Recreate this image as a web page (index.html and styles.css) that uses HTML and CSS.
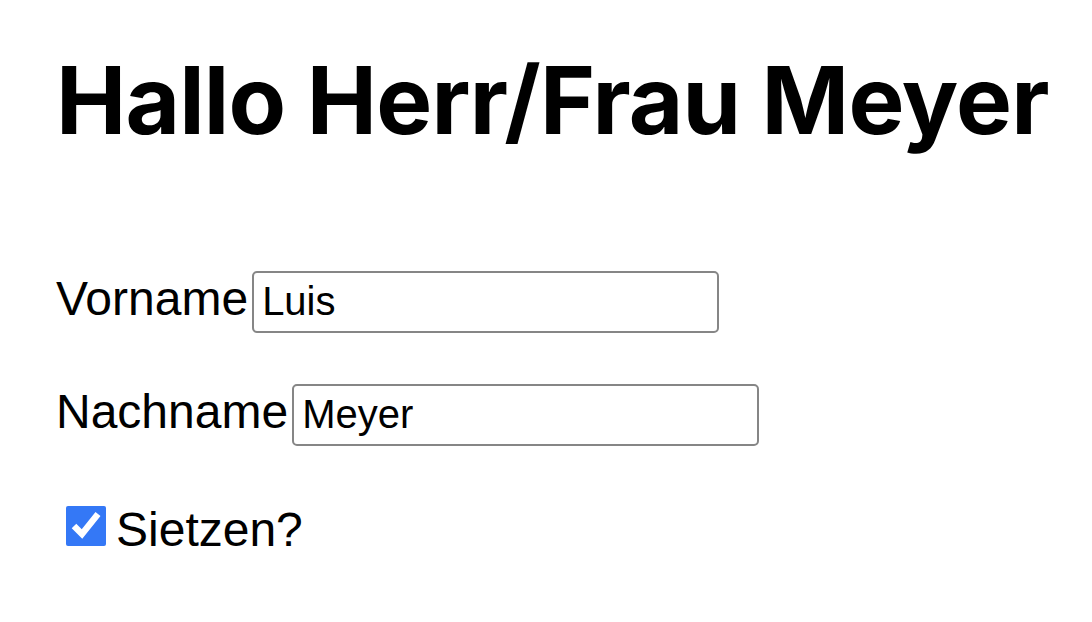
FILE: index.html
```html
<!DOCTYPE html>
<html lang="de">
<head>
<meta charset="utf-8">
<title>Hallo</title>
<link rel="stylesheet" href="styles.css">
</head>
<body>
<main class="page">
  <h1 class="title">Hallo Herr/Frau Meyer</h1>
  <form class="form">
    <div class="row">
      <label class="label" for="vorname">Vorname</label><input class="field" id="vorname" type="text" value="Luis">
    </div>
    <div class="row">
      <label class="label" for="nachname">Nachname</label><input class="field" id="nachname" type="text" value="Meyer">
    </div>
    <div class="row row-check">
      <input class="check" id="sietzen" type="checkbox" checked><label class="label" for="sietzen">Sietzen?</label>
    </div>
  </form>
</main>
</body>
</html>
```
FILE: styles.css
```css
html, body {
  margin: 0;
  padding: 0;
  background: #ffffff;
}

.page {
  padding: 52px 0 0 56px;
  font-family: "Liberation Sans", Arial, sans-serif;
  color: #000000;
}

.title {
  margin: 0;
  font-family: Inter, "Liberation Sans", sans-serif;
  font-weight: 700;
  font-size: 94px;
  line-height: 96px;
  letter-spacing: -0.8px;
}

.form {
  display: flex;
  flex-direction: column;
  gap: 51px;
  margin-top: 120px;
}

.row {
  display: flex;
  align-items: baseline;
  height: 62px;
}

.label {
  font-size: 48px;
  line-height: 62px;
}

.field {
  box-sizing: border-box;
  width: 467px;
  height: 62px;
  margin: 0 0 0 4px;
  padding: 0 8px;
  border: 2px solid #868686;
  border-radius: 5px;
  font-family: "Liberation Sans", Arial, sans-serif;
  font-size: 40px;
  color: #000000;
  background: #ffffff;
  outline: none;
}

.row-check {
  align-items: baseline;
  margin-top: 5px;
}

.check {
  width: 40px;
  height: 40px;
  margin: 0 10px 0 10px;
  accent-color: #3478f6;
}
```
